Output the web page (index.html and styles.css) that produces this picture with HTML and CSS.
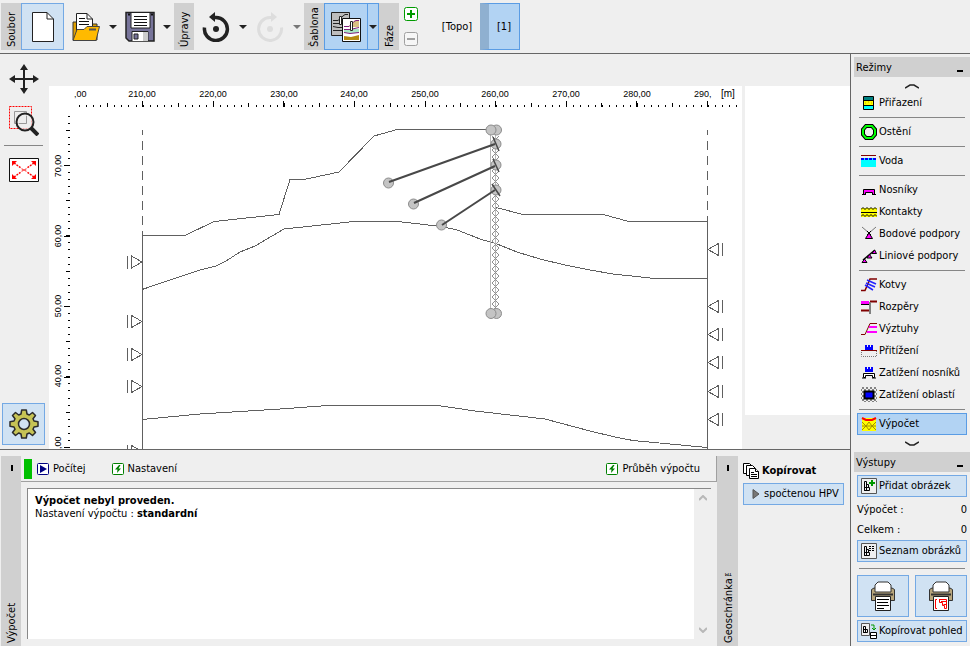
FILE: index.html
```html
<!DOCTYPE html>
<html lang="cs">
<head>
<meta charset="utf-8">
<title>Výpočet</title>
<link rel="stylesheet" href="styles.css">
</head>
<body>
<header class="toolbar">
  <div class="tab">Soubor</div>
  <button class="tool framed" aria-label="Nový"><svg width="24" height="32"><path d="M1.500 1.500H16L22.500 8V30.500H1.500Z" fill="#fff" stroke="#222"/><path d="M16 1.500V8H22.500" fill="none" stroke="#222"/></svg></button>
  <button class="tool" aria-label="Otevřít"><svg width="30" height="32"><path d="M2 29V11H9L11 13H26V29Z" fill="#e0a000" stroke="#333"/><path d="M5.500 22V2.500H16L21.500 8V20" fill="#fff" stroke="#222"/><path d="M16 2.500V8H21.500" fill="none" stroke="#222"/><path d="M8 7.500H14M8 10.500H18M8 13.500H18" stroke="#111"/><path d="M2 29.500L6 18.500H13L16 15.500H28.500L25 29.500Z" fill="#ffba00" stroke="#444"/><path d="M18 18.500H25" stroke="#555" stroke-width="2"/></svg></button>
  <button class="drop" aria-label="Naposledy otevřené"><svg width="8" height="4"><path d="M0 0H8L4 4Z" fill="#222"/></svg></button>
  <button class="tool" aria-label="Uložit"><svg width="30" height="32"><path d="M1 1.500H29V30H4L1 27Z" fill="#77749a" stroke="#222" stroke-width="1.500"/><path d="M6 2V17H25V2" fill="#fff" stroke="#222"/><path d="M9 5.500H22M9 8.500H22M9 11.500H22M9 14.500H22" stroke="#111"/><path d="M7 30V20.500H23V30" fill="#fff" stroke="#222"/><path d="M9 23H13V28H9Z" fill="#77749a" stroke="#222"/><path d="M18 21H23V30H18Z" fill="#ccc"/><path d="M3 3.500H5M26 3.500H28" stroke="#111" stroke-width="2"/></svg></button>
  <button class="drop" aria-label="Uložit jako"><svg width="8" height="4"><path d="M0 0H8L4 4Z" fill="#222"/></svg></button>
  <div class="tab spaced">Úpravy</div>
  <button class="tool" aria-label="Zpět"><svg width="28" height="30"><path d="M2.500 15.500A11.500 11.500 0 1 0 14 5.500H10" fill="none" stroke="#222" stroke-width="3.500"/><path d="M13 0V10L7 5Z" fill="#222"/><circle cx="14" cy="17" r="3" fill="#222"/></svg></button>
  <button class="drop" aria-label="Historie zpět"><svg width="8" height="4"><path d="M0 0H8L4 4Z" fill="#222"/></svg></button>
  <button class="tool" aria-label="Znovu" disabled><svg width="28" height="30"><path d="M25.500 15.500A11.500 11.500 0 1 1 14 5.500H18" fill="none" stroke="#ddd" stroke-width="3"/><path d="M15 0V10L21 5Z" fill="#ddd"/><circle cx="14" cy="17" r="3" fill="#ddd"/></svg></button>
  <button class="drop" aria-label="Historie znovu" disabled><svg width="8" height="4"><path d="M0 0H8L4 4Z" fill="#777"/></svg></button>
  <div class="tab spaced">Šablona</div>
  <button class="tool chosen" aria-label="Šablona"><svg width="30" height="32"><path d="M.5 1.500H18.500V24.500H.5Z" fill="#bdbdbd" stroke="#222"/><path d="M2 9.500H7L12 5 14 3.500H17M2 12.500H8L13 11M2 15.500L7 16.500H11M2 19.500H11" fill="none" stroke="#222"/><path d="M8.500 5.500H10.500V13.500H8.500Z" fill="#fff" stroke="#222"/><path d="M11.500 7.500H29.500V30.500H11.500Z" fill="#fff" stroke="#111"/><path d="M18 16L23 10H28V16Z" fill="#d9c084"/><path d="M13 18H28V22H13Z" fill="#a8e8c4"/><path d="M13 25L20 26 28 24V29H13Z" fill="#b58a10"/><path d="M13 15.500H18L23 10.500 25 9.500H28M13 18.500H19L28 16.500M13 21.500L19 22.500 28 21.500" fill="none" stroke="#80207c"/><path d="M19.500 10.500H21.500V19.500H19.500Z" fill="#fff" stroke="#222"/></svg></button>
  <button class="drop chosen-drop" aria-label="Výběr šablony"><svg width="8" height="4"><path d="M0 0H8L4 4Z" fill="#222"/></svg></button>
  <div class="tab">Fáze</div>
  <div class="stage-edit">
    <button aria-label="Přidat fázi"><svg width="14" height="14"><rect x=".5" y=".5" width="13" height="13" rx="2" fill="#fff" stroke="#009a00"/><path d="M3 7H11M7 3V11" stroke="#009a00" stroke-width="2"/></svg></button>
    <button aria-label="Odebrat fázi" disabled><svg width="14" height="14"><rect x=".5" y=".5" width="13" height="13" rx="2" fill="#f6f6f6" stroke="#a0a0a0"/><path d="M3 7H11" stroke="#a0a0a0" stroke-width="2"/></svg></button>
  </div>
  <button class="stage">[Topo]</button>
  <button class="stage current">[1]</button>
</header>

<div class="body">
  <main class="main">
    <section class="work">
      <nav class="view-tools">
        <button aria-label="Posun"><svg width="30" height="30"><path d="M15 3V27M3 15H27" stroke="#222" stroke-width="2"/><path d="M15 0L19 6H11ZM15 30L19 24H11ZM0 15L6 11V19ZM30 15L24 11V19Z" fill="#222"/></svg></button>
        <button aria-label="Lupa"><svg width="30" height="30"><path d="M.5 .5H22.500V22.500H.5Z" fill="none" stroke="#f00" stroke-dasharray="2 1"/><path d="M5.500 5.500H17.500V17.500H5.500Z" fill="none" stroke="#999"/><circle cx="16" cy="16" r="8.500" fill="#eee" fill-opacity=".7" stroke="#222" stroke-width="2"/><path d="M10 17.500H17.500V10" fill="none" stroke="#999"/><path d="M22 22L29 29" stroke="#222" stroke-width="4"/></svg></button>
        <hr>
        <button aria-label="Zobrazit vše"><svg width="30" height="24"><path d="M.5 .5H29.500V23.500H.5Z" fill="#fff" stroke="#111"/><path d="M5 5L12 10M25 5L18 10M5 19L12 14M25 19L18 14" stroke="#f00" stroke-width="1.500" stroke-dasharray="2 1"/><path d="M3 8V3H8ZM22 3H27V8ZM3 16V21H8ZM22 21H27V16Z" fill="#f00"/><path d="M13 10V11.500H17V10M13 14V12.500H17V14" fill="none" stroke="#f66"/></svg></button>
        <button class="settings" aria-label="Nastavení zobrazení"><svg width="30" height="30" viewBox="-15 -15 30 30"><path d="M-2.300 -14H2.300L3 -10 5.300 -9 8.500 -11.500 11.500 -8.500 9 -5.300 10 -3 14 -2.300V2.300L10 3 9 5.300 11.500 8.500 8.500 11.500 5.300 9 3 10 2.300 14H-2.300L-3 10-5.300 9-8.500 11.500-11.500 8.500-9 5.300-10 3-14 2.300V-2.300L-10-3-9-5.300-11.500-8.500-8.500-11.500-5.300-9-3-10Z" fill="#c6c355" stroke="#2b2b2b" stroke-width="1.500" stroke-linejoin="round"/><circle r="5.500" fill="#d0e2f3" stroke="#2b2b2b" stroke-width="1.500"/></svg></button>
      </nav>
      <div class="canvas">
        <svg class="drawing" role="img" aria-label="Geometrie konstrukce">
          <defs>
            <g id="sl"><path d="M-10.500 -6V6L0 0ZM-14.500 -6.500V6.500"/></g>
            <g id="sr"><path d="M10.500 -6V6L0 0ZM14.500 -6.500V6.500"/></g>
            <pattern id="mesh" width="7" height="7" patternUnits="userSpaceOnUse" x="492" y="136"><path d="M0 0L7 7M7 0L0 7" stroke="#909090" fill="none"/></pattern>
          </defs>
          <g transform="translate(-49 -86)">
            <g class="ticks">
              <path d="M79 106H738" stroke-width="2" stroke-dasharray="1 6.0625"/>
              <path d="M107 105H738" stroke-width="4" stroke-dasharray="1 34.3125"/>
              <path d="M142 104H738" stroke-width="6" stroke-dasharray="1 69.625"/>
              <path d="M69 115.500V449" stroke-width="2" stroke-dasharray="1 6.050"/>
              <path d="M68 129.500V449" stroke-width="4" stroke-dasharray="1 34.250"/>
              <path d="M67 165V449" stroke-width="6" stroke-dasharray="1 69.500"/>
            </g>
            <g class="scale">
              <text x="74" y="97">,00</text>
              <text x="142" y="97" text-anchor="middle">210,00</text>
              <text x="213" y="97" text-anchor="middle">220,00</text>
              <text x="284" y="97" text-anchor="middle">230,00</text>
              <text x="354" y="97" text-anchor="middle">240,00</text>
              <text x="425" y="97" text-anchor="middle">250,00</text>
              <text x="495" y="97" text-anchor="middle">260,00</text>
              <text x="566" y="97" text-anchor="middle">270,00</text>
              <text x="637" y="97" text-anchor="middle">280,00</text>
              <text x="694" y="97">290,</text>
              <text class="unit" x="721" y="97">[m]</text>
              <text transform="translate(61 166) rotate(-90)" text-anchor="middle">70,00</text>
              <text transform="translate(61 236) rotate(-90)" text-anchor="middle">60,00</text>
              <text transform="translate(61 306) rotate(-90)" text-anchor="middle">50,00</text>
              <text transform="translate(61 376) rotate(-90)" text-anchor="middle">40,00</text>
              <text transform="translate(61 449) rotate(-90)">,00</text>
            </g>
            <g class="ground">
              <path d="M142.500 130V235" stroke-dasharray="5 6 9 6 9 6 9 6 9 6 9 6 9 6 9 6"/>
              <path d="M707.500 130V221" stroke-dasharray="5 6 9 6 9 6 9 6 9 6 9 6 9 6"/>
              <path d="M142.500 232V449M707.500 217V449"/>
              <path d="M142 235.500H185L214 221.500 279 214.500 290 179.500H304L339 172 374 136 397 129.500H490"/>
              <path d="M496 207.500L523 214.500H603L629 221.500H707"/>
              <path d="M142 289.500L200 270 216 266 226 261 240 252 255 246 284 229 354 221.500H398L437 226 456 229.500 480 239 497 244 517 252 540 259 565 265 590 270 613 274 655 278.500H707"/>
              <path d="M142 419.500L200 414 280 409 328 405.500H438L475 411 545 419 590 431 615 437 633 440.500 707 447.500"/>
              <use href="#sl" x="142" y="262"/><use href="#sl" x="142" y="321.500"/><use href="#sl" x="142" y="354.500"/><use href="#sl" x="142" y="386.500"/><use href="#sl" x="142" y="451.500"/>
              <use href="#sr" x="708" y="249.500"/><use href="#sr" x="708" y="306.500"/><use href="#sr" x="708" y="334.500"/><use href="#sr" x="708" y="362.500"/><use href="#sr" x="708" y="391.500"/><use href="#sr" x="708" y="419.500"/>
            </g>
            <path d="M490.500 130V313M495.500 130V313" stroke="#b8b8b8"/>
            <path d="M492 136H499V310H492Z" fill="url(#mesh)"/>
            <g fill="#c4c4c4" stroke="#8c8c8c">
              <circle cx="496.500" cy="130" r="5"/><circle cx="491" cy="130" r="5"/>
              <circle cx="496.500" cy="313.500" r="5"/><circle cx="491" cy="313.500" r="5"/>
              <circle cx="496" cy="144" r="5"/><circle cx="496" cy="165" r="5"/><circle cx="496" cy="190" r="5"/>
              <circle cx="388.500" cy="183" r="5"/><circle cx="413.500" cy="204" r="5"/><circle cx="441.500" cy="225" r="5"/>
            </g>
            <g stroke="#484848" stroke-width="2">
              <path d="M389 182L495 144M414 203L495 166M442 225L495 190"/>
              <path d="M493 137L499 151M493 159L499 172M492 184L500 196" stroke-width="1.500"/>
            </g>
          </g>
        </svg>
      </div>
      <div class="legend"></div>
    </section>

    <section class="bottom">
      <div class="side-tab"><span class="pin"></span><span>Výpočet</span></div>
      <div class="analysis">
        <div class="analysis-bar">
          <span class="state"></span>
          <button class="run"><svg width="12" height="12"><rect x=".5" y=".5" width="11" height="11" rx="1" fill="#fff" stroke="#000080"/><path d="M3 2L10 6 3 10Z" fill="#000080"/></svg>Počítej</button>
          <button class="setup"><svg width="12" height="12"><rect x=".5" y=".5" width="11" height="11" rx="1" fill="#fff" stroke="#008000"/><path d="M7 2L3 6.500H5.500L5 10 9 5.500H6.500L8.500 2Z" fill="#008000"/></svg>Nastavení</button>
          <button class="course"><svg width="12" height="12"><rect x=".5" y=".5" width="11" height="11" rx="1" fill="#fff" stroke="#008000"/><path d="M7 2L3 6.500H5.500L5 10 9 5.500H6.500L8.500 2Z" fill="#008000"/></svg>Průběh výpočtu</button>
        </div>
        <div class="report">
          <div class="report-text">
            <p><b>Výpočet nebyl proveden.</b></p>
            <p>Nastavení výpočtu : <b>standardní</b></p>
          </div>
          <div class="scroll"><svg width="8" height="6"><path d="M0 5L4 1 8 5" fill="none" stroke="#b8b8b8" stroke-width="2"/></svg><svg width="8" height="6"><path d="M0 1L4 5 8 1" fill="none" stroke="#b8b8b8" stroke-width="2"/></svg></div>
        </div>
      </div>
      <div class="side-tab geo"><span class="pin"></span><span>Geoschránka™</span></div>
      <div class="clip">
        <h2><svg width="16" height="16"><g fill="#fff" stroke="#000"><path d="M.5 .5H6.500L9.500 3.500V10.500H.5Z"/><path d="M3.500 2.500H9.500L12.500 5.500V12.500H3.500Z"/><path d="M6.500 5.500H12.500L15.500 8.500V15.500H6.500Z"/><path d="M12.500 5.500V8.500H15.500M8 9.500H11M8 11.500H14M8 13.500H14"/></g></svg>Kopírovat</h2>
        <button><svg width="8" height="10"><path d="M1 .5L7 5 1 9.500Z" fill="#777" stroke="#555"/></svg>spočtenou HPV</button>
      </div>
    </section>
  </main>

  <aside class="sidebar">
    <h2 class="head">Režimy<span class="mini"></span></h2>
    <div class="more up"><svg width="14" height="5"><path d="M0 4L5 1H9L14 4" fill="none" stroke="#222" stroke-width="1.500"/></svg></div>
    <nav class="modes">
      <button><svg width="16" height="16"><path d="M2.500 1.500H12.500V14.500H2.500Z" fill="#ff0" stroke="#000"/><path d="M3 2H12V5H3Z" fill="#008080"/><path d="M3 11H12V14H3Z" fill="#0ff"/><path d="M2 5.500H13M2 10.500H13" stroke="#000"/><path d="M4 8H5M7 7H8M10 8H11" stroke="#d0a000"/></svg>Přiřazení</button>
      <hr>
      <button><svg width="16" height="16"><path d="M5 2H11L14 5.500V10.500L11 14H5L2 10.500V5.500Z" fill="#efefef" stroke="#000" stroke-width="4"/><path d="M5 2H11L14 5.500V10.500L11 14H5L2 10.500V5.500Z" fill="none" stroke="#0f0" stroke-width="2"/></svg>Ostění</button>
      <hr>
      <button><svg width="16" height="16"><path d="M0 2.500H15" stroke="#800000"/><path d="M0 5H15V14H0Z" fill="#0ff"/><path d="M0 6H15" stroke="#00f" stroke-width="2" stroke-dasharray="3 1"/></svg>Voda</button>
      <hr>
      <button><svg width="16" height="16"><path d="M2.500 7.500H13.500V12.500H11.500V10.500H4.500V12.500H2.500Z" fill="#f0f" stroke="#000"/><path d="M1 12.500H5M11 12.500H15" stroke="#000"/></svg>Nosníky</button>
      <button><svg width="16" height="16"><path d="M0 4H16V13H0Z" fill="#ff0"/><path d="M0 5.500L2 3.500 4 5.500 6 3.500 8 5.500 10 3.500 12 5.500 14 3.500 16 5.500M0 12.500L2 10.500 4 12.500 6 10.500 8 12.500 10 10.500 12 12.500 14 10.500 16 12.500M0 8.500H16" fill="none" stroke="#000"/></svg>Kontakty</button>
      <button><svg width="16" height="16"><path d="M1 1L8 7 15 1" fill="none" stroke="#777"/><path d="M8 7L11.500 12.500H4.500Z" fill="#f0f" stroke="#000"/><path d="M6 5L10 9M10 5L6 9" stroke="#000"/></svg>Bodové podpory</button>
      <button><svg width="16" height="16"><path d="M2 12L14 2" stroke="#000" stroke-width="1.500"/><path d="M3.500 11L6 14.500H1ZM8.500 6.500L11 10H6ZM13.500 2L15.500 5.500H11Z" fill="#f0f" stroke="#000"/></svg>Liniové podpory</button>
      <hr>
      <button><svg width="16" height="16"><path d="M0 13.500H4L9 2H16" fill="none" stroke="#800000" stroke-width="1.500"/><path d="M6 3L15 7M5 6L14 10M4 8L12 13" stroke="#22f" stroke-width="1.500"/></svg>Kotvy</button>
      <button><svg width="16" height="16"><path d="M0 3.500H8" stroke="#f0f" stroke-width="3"/><path d="M0 5.500H8" stroke="#000"/><path d="M0 11.500H8M9 2.500H16" stroke="#800000" stroke-width="2"/><path d="M9 3V15" stroke="#808080" stroke-width="2"/></svg>Rozpěry</button>
      <button><svg width="16" height="16"><path d="M0 13.500H4L9 2.500H16" fill="none" stroke="#800000"/><path d="M8 6H16M6 11H16" stroke="#f0f" stroke-width="2"/></svg>Výztuhy</button>
      <button><svg width="16" height="16"><path d="M4 7V2H6V4H7V2H9V4H10V2H12V7Z" fill="#00f"/><path d="M0 7.500H16" stroke="#800000"/><path d="M.5 9V13.500H15.500V8" fill="none" stroke="#777" stroke-dasharray="1 1"/></svg>Přitížení</button>
      <button><svg width="16" height="16"><path d="M4 7V2H6V4H7V2H9V4H10V2H12V7Z" fill="#00f"/><path d="M2.500 8.500H13.500V12.500H11.500V10.500H4.500V12.500H2.500Z" fill="#fff" stroke="#000"/><path d="M1 13H5M11 13H15" stroke="#000"/></svg>Zatížení nosníků</button>
      <button><svg width="16" height="16"><path d="M0 3L3 0M0 7L7 0M0 11L11 0M1 14L15 0M4 15L16 3M8 15L16 7M12 15L16 11M0 11L4 15M0 7L8 15M0 3L12 15M1 0L16 15M5 0L16 11M9 0L16 7M13 0L16 3" stroke="#555" stroke-width=".7"/><path d="M3.500 4.500H12.500V11.500H3.500Z" fill="#00f" stroke="#000" stroke-width="2"/></svg>Zatížení oblastí</button>
      <hr>
      <button class="active"><svg width="16" height="16"><path d="M1 2H15V15H1Z" fill="#ff0"/><path d="M1 6L5 10 8 6 11 10 15 6M1 14L5 10 8 14 11 10 15 14M1 10H15" fill="none" stroke="#a09000"/><path d="M1 2L5 4H11L15 2" fill="none" stroke="#f00" stroke-width="2"/></svg>Výpočet</button>
    </nav>
    <div class="more down"><svg width="14" height="5"><path d="M0 1L5 4H9L14 1" fill="none" stroke="#222" stroke-width="1.500"/></svg></div>
    <h2 class="head">Výstupy<span class="mini"></span></h2>
    <div class="outputs">
      <button class="out"><svg width="16" height="16"><path d="M.5 .5H15.500V15.500H.5Z" fill="#efefef" stroke="#555"/><path d="M3.500 3.500H5.500V12.500H3.500ZM3.500 9.500H8.500V12.500H3.500ZM5.500 6.500H7.500V9.500" fill="none" stroke="#000"/><path d="M8 5H14M11 2V8" stroke="#090" stroke-width="2"/></svg>Přidat obrázek</button>
      <dl>
        <div><dt>Výpočet :</dt><dd>0</dd></div>
        <div><dt>Celkem :</dt><dd>0</dd></div>
      </dl>
      <button class="out"><svg width="16" height="16"><path d="M.5 .5H15.500V15.500H.5Z" fill="#efefef" stroke="#555"/><path d="M3.500 3.500H5.500V12.500H3.500ZM3.500 9.500H8.500V12.500H3.500ZM5.500 6.500H7.500V9.500" fill="none" stroke="#000"/><path d="M8 3.500H10M11 3.500H13M8 5.500H10M11 5.500H13M8 7.500H10M11 7.500H13" stroke="#000"/></svg>Seznam obrázků</button>
      <hr>
      <div class="prints">
        <button aria-label="Tisk protokolu"><svg width="26" height="30"><path d="M1.500 8.500L4 7H22L24.500 8.500V19.500H1.500Z" fill="#b8a67c" stroke="#333"/><path d="M5 4L8 1H18L21 4V11H5Z" fill="#fff" stroke="#333"/><path d="M3 13.500H23" stroke="#333" stroke-width="2"/><path d="M5.500 15.500H20.500V29.500H5.500Z" fill="#fff" stroke="#222"/><path d="M7 18.500H19M7 21.500H18M7 24.500H19M7 27.500H14" stroke="#000"/></svg></button>
        <button aria-label="Tisk obrázku"><svg width="26" height="30"><path d="M1.500 8.500L4 7H22L24.500 8.500V19.500H1.500Z" fill="#b8a67c" stroke="#333"/><path d="M5 4L8 1H18L21 4V11H5Z" fill="#fff" stroke="#333"/><path d="M3 13.500H23" stroke="#333" stroke-width="2"/><path d="M5.500 15.500H20.500V29.500H5.500Z" fill="#fff" stroke="#222"/><path d="M9 18.500H7.500V27.500H9M11 18.500H18.500V27.500H16.500V24.500H14.500V21.500H11.500V18.500M13 20.500H18M15.500 23.500H18" fill="none" stroke="#f00"/></svg></button>
      </div>
      <button class="out"><svg width="16" height="16"><path d="M.5 .5H8.500V12.500H.5Z" fill="#efefef" stroke="#555"/><path d="M2.500 3.500H4.500V9.500H2.500ZM2.500 6.500H6.500V9.500H2.500Z" fill="none" stroke="#000"/><path d="M10 2H13V6M11 5L13 7 15 5" fill="none" stroke="#090"/><path d="M9.500 9.500H15.500V15.500H9.500ZM9.500 12.500H15.500" fill="#fff" stroke="#000"/></svg>Kopírovat pohled</button>
    </div>
  </aside>
</div>
</body>
</html>
```
FILE: styles.css
```css
* { box-sizing: border-box; }

body {
  margin: 0;
  height: 100vh;
  display: flex;
  flex-direction: column;
  overflow: hidden;
  background: #efefef;
  color: #000;
  font: 11px/14px "DejaVu Sans Condensed", "DejaVu Sans", sans-serif;
}

button {
  display: flex;
  align-items: center;
  margin: 0;
  padding: 0;
  border: 1px solid transparent;
  background: none;
  color: inherit;
  font: inherit;
  white-space: nowrap;
}

svg { display: block; flex: none; }
h2, p, dl, dd { margin: 0; }

hr {
  height: 1px;
  margin: 0;
  border: 0;
  background: #868686;
}

/* Top toolbar */
.toolbar {
  display: flex;
  flex: none;
  padding: 3px 1px;
  border-bottom: 1px solid #666;
}

.tab {
  display: flex;
  align-items: center;
  width: 20px;
  height: 47px;
  padding: 3px 2px 0 0;
  writing-mode: vertical-rl;
  transform: rotate(180deg);
  background: #d0d0d0;
  line-height: 18px;
  white-space: nowrap;
}
.tab.spaced { margin-left: 2px; }

.tool { justify-content: center; width: 44px; }
.tool.framed { width: 43px; border-color: #74a9e4; background: #d0e2f3; }
.tool.chosen { width: 44px; border-color: #5a9ce4; background: #b2d3f3; }
.drop { justify-content: center; width: 10px; }
.drop.chosen-drop {
  width: 11px;
  border-color: #5a9ce4;
  border-left: 0;
  background: #b2d3f3;
}

.stage-edit {
  display: flex;
  flex-direction: column;
  justify-content: space-between;
  margin: 0 18px 0 4px;
  padding: 3px 0;
}
.stage-edit button { width: 16px; height: 16px; }

.stage { justify-content: center; width: 40px; }
.stage.current {
  margin-left: 3px;
  border-color: #5a9ce4;
  border-left: 9px solid #8fb0d0;
  background: #b2d3f3;
}

/* Page columns */
.body { display: flex; flex: 1; min-height: 0; }
.main { display: flex; flex: 1; flex-direction: column; min-width: 0; }
.work { display: flex; flex: 1; min-height: 0; border-bottom: 1px solid #666; }

.view-tools {
  display: flex;
  flex: none;
  flex-direction: column;
  align-items: center;
  gap: 12px;
  width: 49px;
  padding: 10px 4px 4px 2px;
}
.view-tools button { border-width: 0; }
.view-tools hr { align-self: stretch; margin: -3px 2px 0; }
.view-tools .settings {
  justify-content: center;
  width: 43px;
  height: 42px;
  margin-top: auto;
  border: 1px solid #74a9e4;
  background: #d0e2f3;
}

.canvas { flex: 1; min-width: 0; margin-top: 32px; background: #fff; }
.drawing { width: 100%; height: 100%; overflow: hidden; }
.ticks { stroke: #000; fill: none; shape-rendering: crispEdges; }
.scale { fill: #000; font: 9px "Liberation Sans", sans-serif; }
.unit { font-size: 10px; }
.ground { fill: none; stroke: #606060; shape-rendering: crispEdges; }
.legend { width: 105px; margin: 32px 0 34px 3px; background: #fff; }

/* Bottom frame */
.bottom { display: flex; flex: none; height: 196px; padding: 6px 6px 0 1px; }

.side-tab {
  display: flex;
  flex: none;
  align-items: center;
  flex-direction: row-reverse;
  justify-content: space-between;
  width: 20px;
  padding: 3px 2px 9px 0;
  writing-mode: vertical-rl;
  transform: rotate(180deg);
  background: #d0d0d0;
  line-height: 18px;
}
.side-tab.geo { width: 21px; }
.pin { width: 2px; height: 6px; background: #000; }

.analysis { display: flex; flex: 1; flex-direction: column; min-width: 0; }
.analysis-bar {
  display: flex;
  align-items: center;
  height: 26px;
  padding: 0 15px 0 3px;
  border: 1px solid #a0a0a0;
  border-width: 0 1px 1px 0;
}
.analysis-bar button { gap: 4px; }
.state { width: 8px; height: 20px; margin-right: 4px; background: #00c000; }
.setup { margin-left: 24px; }
.course { margin-left: auto; }

.report {
  display: flex;
  flex: 1;
  margin: 6px 6px 7px;
  border: 1px solid #888;
  border-width: 1px 0 0 1px;
  background: #fff;
}
.report-text { flex: 1; padding: 5px 7px; line-height: 13px; }
.scroll {
  display: flex;
  flex-direction: column;
  align-items: center;
  justify-content: space-between;
  width: 17px;
  padding: 6px 0;
  background: #efefef;
}

.clip { width: 106px; padding: 6px 0 0 5px; }
.clip h2 { display: flex; align-items: center; gap: 3px; font-size: 11px; line-height: 18px; }
.clip button {
  gap: 4px;
  width: 101px;
  height: 22px;
  margin-top: 3px;
  padding-left: 8px;
  border-color: #74a9e4;
  background: #d0e2f3;
}

/* Right sidebar */
.sidebar {
  flex: none;
  width: 120px;
  padding: 3px 0 0 3px;
  border-left: 1px solid #666;
}
.head {
  display: flex;
  justify-content: space-between;
  height: 20px;
  padding: 0 7px 0 2px;
  background: #d0d0d0;
  font-size: 11px;
  font-weight: 400;
  line-height: 22px;
}
.mini { width: 6px; height: 2px; margin-top: 13px; background: #000; }
.more { display: flex; align-items: center; justify-content: center; }
.up { height: 15px; padding-top: 3px; }
.down { height: 17px; }

.modes, .outputs { padding: 0 3px; }
.modes button, .out {
  gap: 2px;
  width: 100%;
  height: 22px;
  padding-left: 3px;
}
.modes hr { margin: 3px 2px; }
.modes .active { border-color: #5a9ce4; background: #b2d3f3; }

.outputs { padding-top: 3px; }
.out, .prints button { border-color: #74a9e4; background: #d0e2f3; }
.outputs dl { margin: 3px 0 0; line-height: 20px; }
.outputs dl div { display: flex; justify-content: space-between; }
.outputs hr { margin: 6px 2px; }
.prints { display: flex; gap: 6px; margin-bottom: 3px; }
.prints button { flex: 1; justify-content: center; height: 42px; }
```
